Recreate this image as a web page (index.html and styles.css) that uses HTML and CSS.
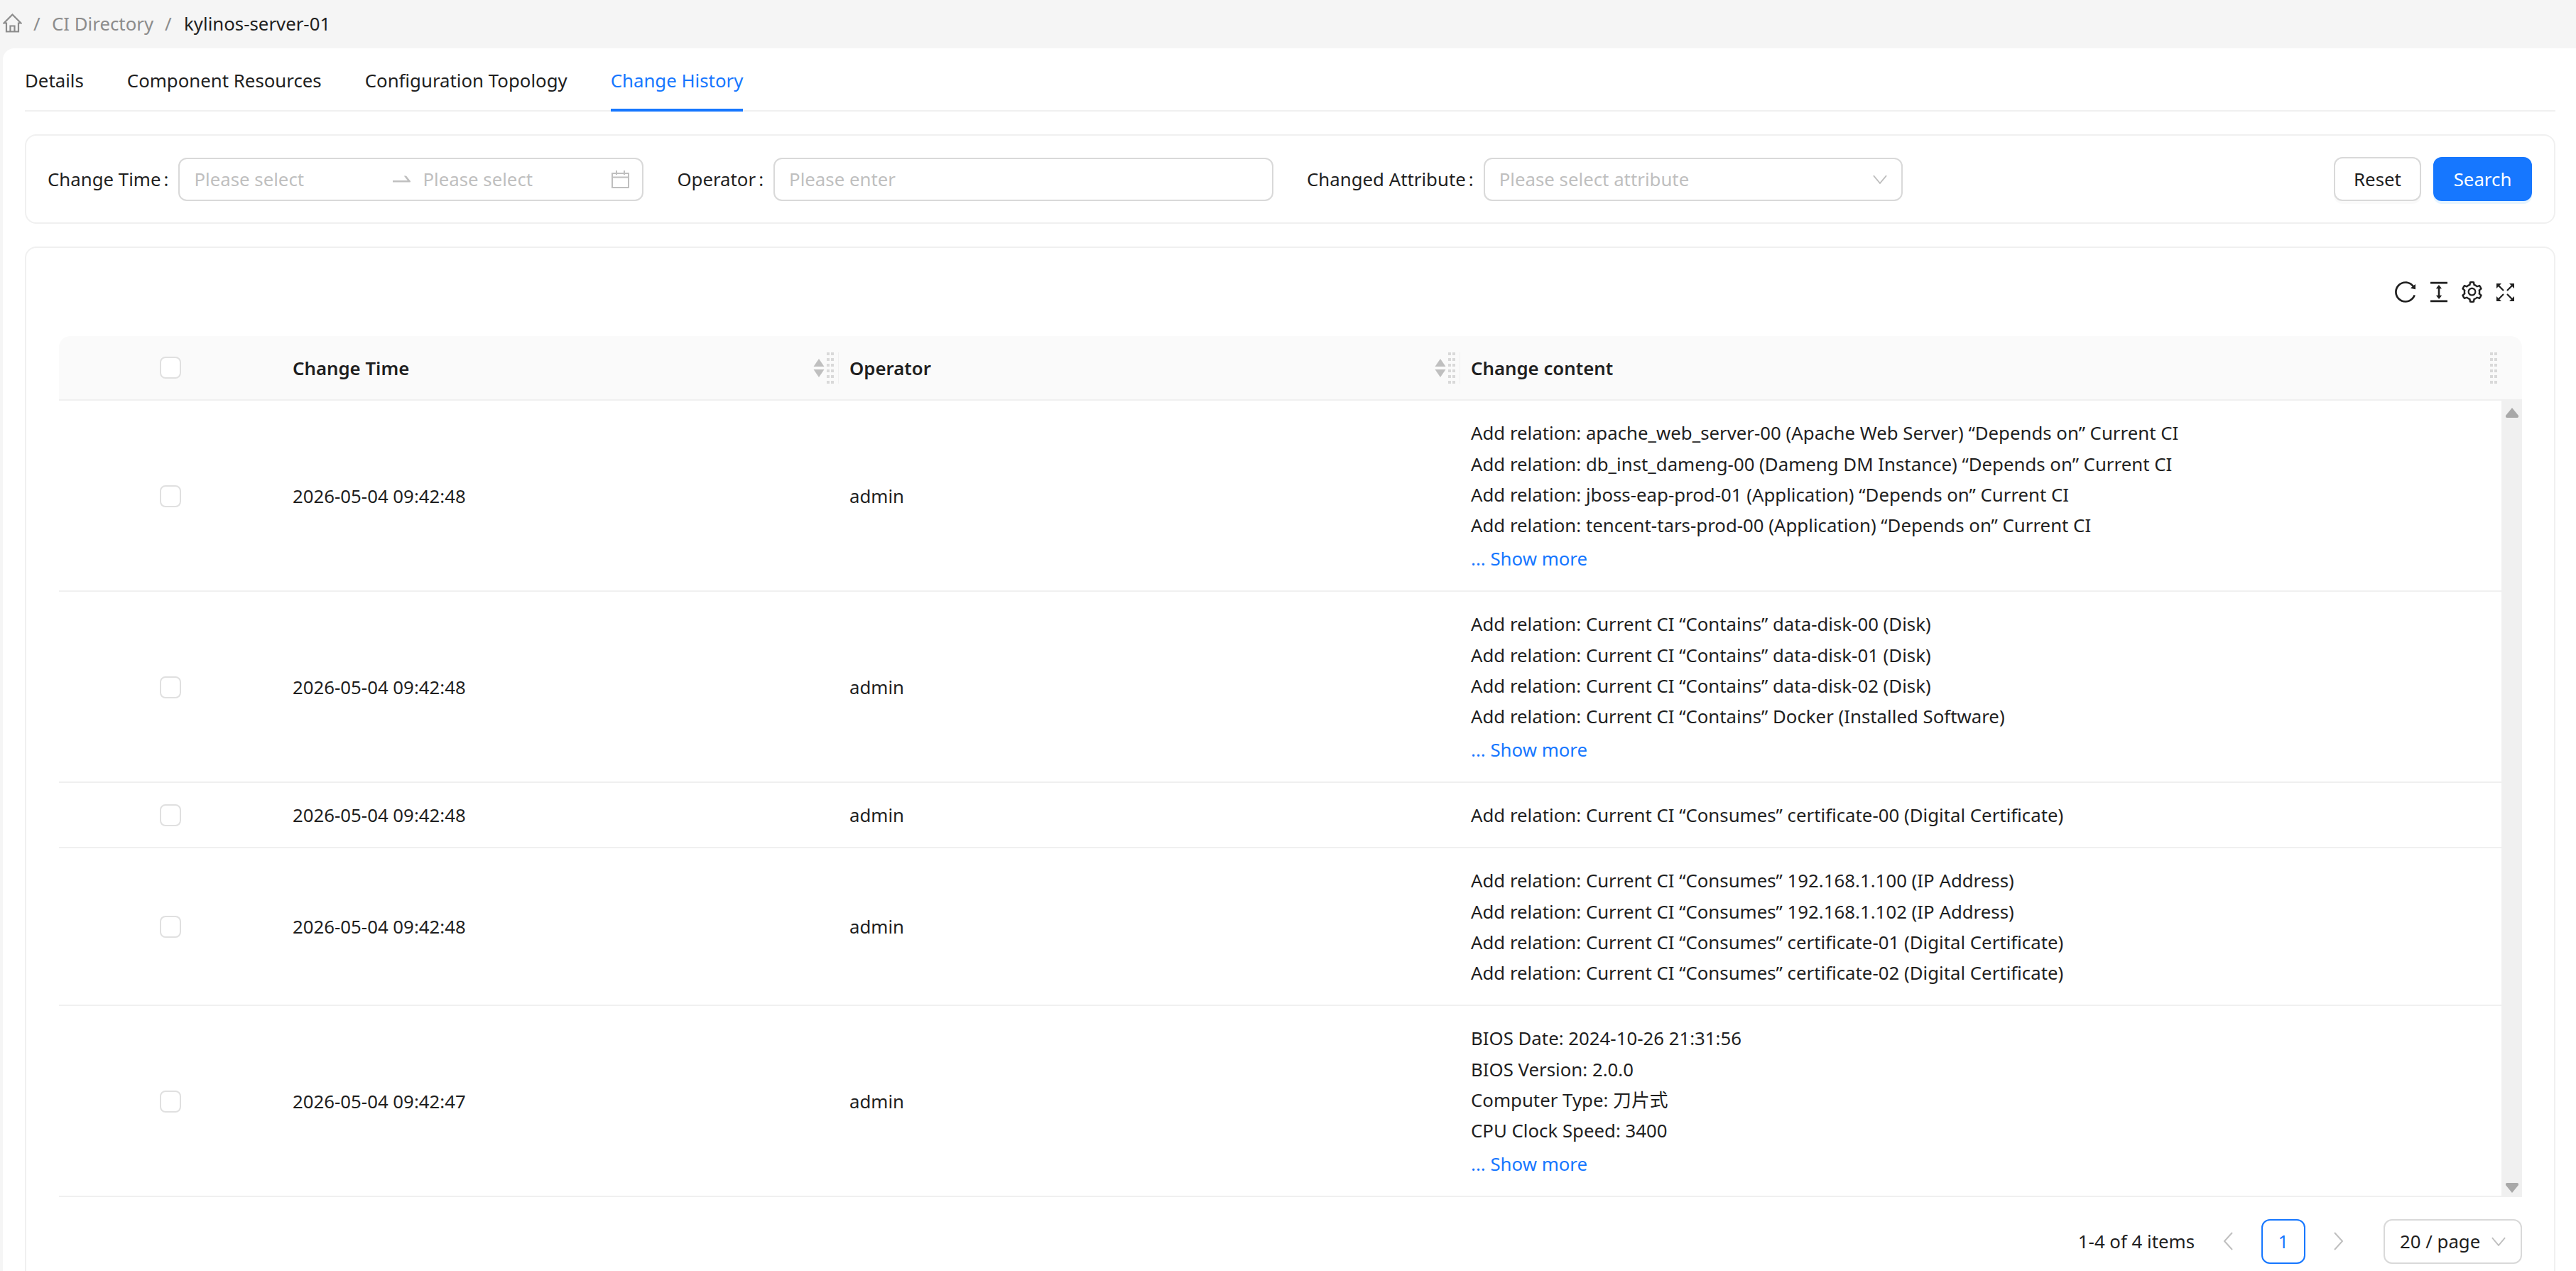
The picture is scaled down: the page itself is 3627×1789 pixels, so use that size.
FILE: index.html
```html
<!DOCTYPE html>
<html lang="en">
<head>
    <meta charset="UTF-8">
    <title>kylinos-server-01 - Change History</title>
    <link rel="stylesheet" href="styles.css">
</head>
<body>
    <svg class="sprite" xmlns="http://www.w3.org/2000/svg">
        <symbol id="grip" viewBox="0 0 10 44">
            <path fill="#d9d9d9" d="M0 0h4v4H0zM6 0h4v4H6zM0 8h4v4H0zM6 8h4v4H6zM0 16h4v4H0zM6 16h4v4H6zM0 24h4v4H0zM6 24h4v4H6zM0 32h4v4H0zM6 32h4v4H6zM0 40h4v4H0zM6 40h4v4H6z"/>
        </symbol>
        <symbol id="sort" viewBox="0 0 16 26">
            <path fill="#bfbfbf" d="M8 0l7.500 11H.5zM.5 15h15L8 26z"/>
        </symbol>
        <symbol id="chevron" viewBox="0 0 22 14">
            <path fill="none" stroke="#bfbfbf" stroke-width="2" d="M1 1l10 12L21 1"/>
        </symbol>
    </svg>

    <nav class="breadcrumb">
        <svg class="home-icon" viewBox="0 0 27 27"><path fill="none" stroke="#8c8c8c" stroke-width="2.200" d="M1.500 13.500L13.500 1.500l12 12h-3.500v12H5v-12zM10.500 25.500v-8h6v8"/></svg>
        <span class="crumb-sep">/</span>
        <span class="crumb-link">CI Directory</span>
        <span class="crumb-sep">/</span>
        <span class="crumb-current">kylinos-server-01</span>
    </nav>

    <main class="content">
        <div class="tabs">
            <div class="tab">Details</div>
            <div class="tab">Component Resources</div>
            <div class="tab">Configuration Topology</div>
            <div class="tab active">Change History</div>
        </div>

        <section class="filter-box">
            <div class="filter-item">
                <label class="filter-label">Change Time<span class="colon">:</span></label>
                <div class="field field-range">
                    <span class="placeholder range-start">Please select</span>
                    <svg class="range-arrow" viewBox="144 376 736 272"><path fill="#bfbfbf" d="M873.100 596.200l-164-208A32 32 0 00684 376h-64.800c-6.700 0-10.400 7.700-6.300 13l144.300 183H152c-4.400 0-8 3.600-8 8v60c0 4.400 3.600 8 8 8h695.900c26.800 0 41.700-30.800 25.200-51.800z"/></svg>
                    <span class="placeholder range-end">Please select</span>
                    <svg class="calendar-icon" viewBox="0 0 25 25"><path fill="none" stroke="#bfbfbf" stroke-width="2" d="M1 4h23v20H1zM1 9.500h23M7 0v6M18 0v6"/></svg>
                </div>
            </div>
            <div class="filter-item">
                <label class="filter-label">Operator<span class="colon">:</span></label>
                <div class="field field-operator"><span class="placeholder">Please enter</span></div>
            </div>
            <div class="filter-item">
                <label class="filter-label">Changed Attribute<span class="colon">:</span></label>
                <div class="field field-attr">
                    <span class="placeholder">Please select attribute</span>
                    <svg class="select-arrow"><use href="#chevron"/></svg>
                </div>
            </div>
            <div class="filter-actions">
                <button class="btn">Reset</button>
                <button class="btn btn-primary">Search</button>
            </div>
        </section>

        <section class="table-card">
            <div class="toolbar">
                <span class="tool"><svg class="tool-icon" viewBox="100 90 820 844"><path d="M909.100 209.300l-56.400 44.100C775.800 155.100 656.200 92 521.900 92 290 92 102.300 279.500 102 511.500 101.700 743.700 289.800 932 521.900 932c181.300 0 335.800-115 394.600-276.100 1.500-4.200-.7-8.900-4.900-10.300l-56.700-19.500a8 8 0 00-10.100 4.800c-1.800 5-3.800 10-5.900 14.900-17.300 41-42.100 77.800-73.700 109.400A344.770 344.770 0 01655.900 829c-42.300 17.900-87.400 27-133.800 27-46.500 0-91.500-9.100-133.800-27A341.500 341.500 0 01279 755.200a342.160 342.160 0 01-73.700-109.400c-17.900-42.400-27-87.400-27-133.900s9.100-91.500 27-133.900c17.300-41 42.100-77.800 73.700-109.400 31.600-31.600 68.400-56.400 109.300-73.800 42.300-17.900 87.400-27 133.800-27 46.500 0 91.500 9.100 133.800 27a341.500 341.500 0 01109.300 73.800c9.900 9.900 19.200 20.400 27.800 31.400l-60.200 47a8 8 0 003 14.100l175.600 43c5 1.200 9.900-2.600 9.900-7.700l.8-180.900c-.1-6.600-7.800-10.300-13-6.200z"/></svg></span>
                <span class="tool"><svg class="tool-icon tool-height" viewBox="176 112 672 800"><path d="M840 836H184c-4.400 0-8 3.600-8 8v60c0 4.400 3.600 8 8 8h656c4.400 0 8-3.600 8-8v-60c0-4.400-3.600-8-8-8zm0-724H184c-4.400 0-8 3.600-8 8v60c0 4.400 3.600 8 8 8h656c4.400 0 8-3.600 8-8v-60c0-4.400-3.600-8-8-8zM610.800 378c6 0 9.400-7 5.700-11.700L515.700 238.700a7.140 7.140 0 00-11.300 0L403.600 366.300a7.230 7.230 0 005.700 11.700H476v268h-62.800c-6 0-9.400 7-5.600 11.700l100.800 127.500c2.900 3.700 8.500 3.700 11.300 0l100.800-127.500c3.700-4.700.4-11.700-5.600-11.700H548V378h62.800z"/></svg></span>
                <span class="tool"><svg class="tool-icon" viewBox="88 64 848 896"><path d="M924.800 625.700l-65.500-56c3.100-19 4.700-38.400 4.700-57.800s-1.600-38.800-4.700-57.800l65.500-56a32.030 32.030 0 009.300-35.200l-.9-2.600a443.740 443.740 0 00-79.700-137.900l-1.800-2.100a32.120 32.120 0 00-35.100-9.500l-81.300 28.900c-30-24.600-63.500-44-99.700-57.600l-15.700-85a32.050 32.050 0 00-25.800-25.700l-2.700-.5c-52.100-9.400-106.900-9.400-159 0l-2.700.5a32.050 32.050 0 00-25.800 25.700l-15.800 85.400a351.860 351.860 0 00-99 57.400l-81.900-29.100a32 32 0 00-35.100 9.500l-1.800 2.100a446.020 446.020 0 00-79.700 137.900l-.9 2.600c-4.500 12.500-.8 26.500 9.300 35.200l66.300 56.600c-3.100 18.800-4.600 38-4.600 57.100 0 19.200 1.500 38.400 4.600 57.100L99 625.500a32.030 32.030 0 00-9.300 35.200l.9 2.600c18.100 50.400 44.900 96.900 79.700 137.900l1.800 2.100a32.120 32.120 0 0035.100 9.500l81.900-29.100c29.800 24.500 63.100 43.900 99 57.400l15.800 85.400a32.050 32.050 0 0025.800 25.700l2.700.5a449.400 449.400 0 00159 0l2.700-.5a32.050 32.050 0 0025.800-25.700l15.700-85a350 350 0 0099.700-57.600l81.300 28.900a32 32 0 0035.100-9.500l1.800-2.100c34.800-41.100 61.600-87.500 79.700-137.900l.9-2.600c4.500-12.300.8-26.300-9.300-35zM788.300 465.900c2.500 15.100 3.800 30.600 3.800 46.100s-1.300 31-3.800 46.100l-6.600 40.100 74.700 63.900a370.030 370.030 0 01-42.600 73.600L721 702.800l-31.400 25.800c-23.900 19.600-50.500 35-79.300 45.800l-38.100 14.300-17.900 97a377.500 377.500 0 01-85 0l-17.900-97.200-37.800-14.500c-28.500-10.800-55-26.200-78.700-45.700l-31.400-25.900-93.400 33.200c-17-22.900-31.200-47.600-42.600-73.600l75.500-64.500-6.500-40c-2.400-14.900-3.700-30.300-3.700-45.500 0-15.300 1.200-30.600 3.700-45.500l6.500-40-75.500-64.500c11.300-26.100 25.600-50.700 42.600-73.600l93.400 33.200 31.400-25.900c23.700-19.500 50.200-34.900 78.700-45.700l37.900-14.300 17.900-97.200c28.100-3.200 56.800-3.200 85 0l17.900 97 38.100 14.300c28.700 10.800 55.400 26.200 79.300 45.800l31.400 25.800 92.800-32.900c17 22.900 31.200 47.600 42.600 73.600L781.800 426l6.500 39.900zM512 326c-97.200 0-176 78.800-176 176s78.800 176 176 176 176-78.800 176-176-78.800-176-176-176zm79.200 255.200A111.600 111.600 0 01512 614c-29.900 0-58-11.700-79.200-32.800A111.600 111.600 0 01400 502c0-29.900 11.700-58 32.800-79.200C454 401.600 482.100 390 512 390c29.900 0 58 11.600 79.200 32.800A111.600 111.600 0 01624 502c0 29.900-11.700 58-32.800 79.200z"/></svg></span>
                <span class="tool"><svg class="tool-full" viewBox="0 0 25 25"><path fill="none" stroke="#1f1f1f" stroke-width="2.200" d="M2 2l8 8M23 2l-8 8M2 23l8-8M23 23l-8-8"/><path fill="#1f1f1f" d="M0 0h7L0 7zM25 0v7l-7-7zM0 25v-7l7 7zM25 25h-7l7-7z"/></svg></span>
            </div>

            <div class="table-head">
                <div class="head-cell head-check"><span class="checkbox"></span></div>
                <div class="head-cell head-divided">
                    <span class="head-title">Change Time</span>
                    <svg class="sort-icon"><use href="#sort"/></svg>
                    <svg class="grip"><use href="#grip"/></svg>
                </div>
                <div class="head-cell head-divided">
                    <span class="head-title">Operator</span>
                    <svg class="sort-icon"><use href="#sort"/></svg>
                    <svg class="grip"><use href="#grip"/></svg>
                </div>
                <div class="head-cell head-last">
                    <span class="head-title">Change content</span>
                    <svg class="grip"><use href="#grip"/></svg>
                </div>
            </div>

            <div class="table-body">
                <div class="rows">
                    <div class="row">
                        <div class="cell cell-check"><span class="checkbox"></span></div>
                        <div class="cell">2026-05-04 09:42:48</div>
                        <div class="cell">admin</div>
                        <div class="cell cell-lines">
                            <div>Add relation: apache_web_server-00 (Apache Web Server) “Depends on” Current CI</div>
                            <div>Add relation: db_inst_dameng-00 (Dameng DM Instance) “Depends on” Current CI</div>
                            <div>Add relation: jboss-eap-prod-01 (Application) “Depends on” Current CI</div>
                            <div>Add relation: tencent-tars-prod-00 (Application) “Depends on” Current CI</div>
                            <div class="more">... Show more</div>
                        </div>
                    </div>
                    <div class="row">
                        <div class="cell cell-check"><span class="checkbox"></span></div>
                        <div class="cell">2026-05-04 09:42:48</div>
                        <div class="cell">admin</div>
                        <div class="cell cell-lines">
                            <div>Add relation: Current CI “Contains” data-disk-00 (Disk)</div>
                            <div>Add relation: Current CI “Contains” data-disk-01 (Disk)</div>
                            <div>Add relation: Current CI “Contains” data-disk-02 (Disk)</div>
                            <div>Add relation: Current CI “Contains” Docker (Installed Software)</div>
                            <div class="more">... Show more</div>
                        </div>
                    </div>
                    <div class="row">
                        <div class="cell cell-check"><span class="checkbox"></span></div>
                        <div class="cell">2026-05-04 09:42:48</div>
                        <div class="cell">admin</div>
                        <div class="cell cell-lines">
                            <div>Add relation: Current CI “Consumes” certificate-00 (Digital Certificate)</div>
                        </div>
                    </div>
                    <div class="row">
                        <div class="cell cell-check"><span class="checkbox"></span></div>
                        <div class="cell">2026-05-04 09:42:48</div>
                        <div class="cell">admin</div>
                        <div class="cell cell-lines">
                            <div>Add relation: Current CI “Consumes” 192.168.1.100 (IP Address)</div>
                            <div>Add relation: Current CI “Consumes” 192.168.1.102 (IP Address)</div>
                            <div>Add relation: Current CI “Consumes” certificate-01 (Digital Certificate)</div>
                            <div>Add relation: Current CI “Consumes” certificate-02 (Digital Certificate)</div>
                        </div>
                    </div>
                    <div class="row">
                        <div class="cell cell-check"><span class="checkbox"></span></div>
                        <div class="cell">2026-05-04 09:42:47</div>
                        <div class="cell">admin</div>
                        <div class="cell cell-lines">
                            <div>BIOS Date: 2024-10-26 21:31:56</div>
                            <div>BIOS Version: 2.0.0</div>
                            <div>Computer Type: 刀片式</div>
                            <div>CPU Clock Speed: 3400</div>
                            <div class="more">... Show more</div>
                        </div>
                    </div>
                </div>
                <div class="scrollbar">
                    <svg class="scroll-arrow" viewBox="0 0 18 14"><path d="M9 0l9 11q.5 3-2 3H2q-2.500 0-2-3z"/></svg>
                    <svg class="scroll-arrow" viewBox="0 0 18 14"><path d="M9 14L0 3q-.5-3 2-3h14q2.500 0 2 3z"/></svg>
                </div>
            </div>

            <div class="pagination">
                <span class="page-total">1-4 of 4 items</span>
                <svg class="page-arrow page-prev" viewBox="0 0 14 26"><path d="M13 1L2 13l11 12"/></svg>
                <span class="page-num">1</span>
                <svg class="page-arrow page-next" viewBox="0 0 14 26"><path d="M1 1l11 12L1 25"/></svg>
                <div class="page-size">
                    <span>20 / page</span>
                    <svg class="size-arrow"><use href="#chevron"/></svg>
                </div>
            </div>
        </section>
    </main>
</body>
</html>
```

FILE: styles.css
```css
html, body {
    height: 100%;
}
body {
    margin: 0;
    overflow: hidden;
    background: #f5f5f5;
    color: #1f1f1f;
    font-family: "Noto Sans", "Noto Sans CJK SC", sans-serif;
    font-size: 25.8px;
    line-height: 44px;
}
.sprite {
    display: none;
}

/* breadcrumb */
.breadcrumb {
    display: flex;
    align-items: center;
    height: 68px;
    box-sizing: border-box;
    padding: 0 0 3px 4px;
}
.home-icon {
    width: 27px;
    height: 27px;
    margin-right: 16px;
}
.crumb-sep {
    color: #8c8c8c;
    width: 10px;
}
.crumb-link {
    color: #8c8c8c;
    margin: 0 16px;
}
.crumb-current {
    margin-left: 17px;
}

/* white page card */
.content {
    margin-left: 4px;
    padding: 0 29px 0 31px;
    background: #fff;
    border-top-left-radius: 16px;
    min-height: 1721px;
}
.tabs {
    display: flex;
    gap: 61px;
    height: 89px;
    box-sizing: border-box;
    border-bottom: 2px solid #f0f0f0;
}
.tab {
    padding-top: 23px;
    height: 89px;
    box-sizing: border-box;
}
.tab.active {
    color: #1677ff;
    border-bottom: 4px solid #1677ff;
}

/* filter bar */
.filter-box {
    display: flex;
    align-items: center;
    height: 126px;
    box-sizing: border-box;
    margin-top: 32px;
    padding: 0 31px 0 30px;
    border: 2px solid #f0f0f0;
    border-radius: 16px;
}
.filter-item {
    display: flex;
    align-items: center;
    margin-right: 47px;
}
.filter-label {
    margin-right: 14px;
    white-space: nowrap;
}
.colon {
    margin-left: 4px;
}
.field {
    display: flex;
    align-items: center;
    height: 61px;
    box-sizing: border-box;
    padding: 0 20px;
    border: 2px solid #d9d9d9;
    border-radius: 12px;
    background: #fff;
}
.field-range {
    width: 655px;
    padding-right: 18px;
}
.field-operator {
    width: 704px;
}
.field-attr {
    width: 590px;
    justify-content: space-between;
}
.placeholder {
    color: #bfbfbf;
    white-space: nowrap;
}
.range-start {
    width: 280px;
}
.range-arrow {
    width: 25px;
    height: 10px;
    margin-right: 17px;
}
.range-end {
    width: 266px;
}
.calendar-icon {
    width: 25px;
    height: 25px;
}
.select-arrow {
    width: 20px;
    height: 13px;
}
.filter-actions {
    display: flex;
    gap: 17px;
    margin-left: auto;
}
.btn {
    height: 62px;
    width: 123px;
    padding: 0;
    border: 2px solid #d9d9d9;
    border-radius: 12px;
    background: #fff;
    color: #1f1f1f;
    font: inherit;
    box-shadow: 0 4px 0 rgba(0, 0, 0, 0.02);
}
.btn-primary {
    width: 139px;
    border-color: #1677ff;
    background: #1677ff;
    color: #fff;
    box-shadow: 0 4px 0 #e6f4ff;
}

/* table card */
.table-card {
    margin-top: 32px;
    padding: 0 45px 0 46px;
    border: 2px solid #f0f0f0;
    border-radius: 16px;
    height: 1500px;
    box-sizing: border-box;
}
.toolbar {
    display: flex;
    justify-content: flex-end;
    align-items: center;
    height: 124px;
}
.tool {
    display: flex;
    justify-content: center;
    align-items: center;
    width: 47px;
}
.tool-icon {
    width: 29px;
    height: 30px;
    fill: #1f1f1f;
}
.tool-height {
    width: 24px;
}
.tool-full {
    width: 25px;
    height: 25px;
}

.table-head {
    display: grid;
    grid-template-columns: 314px 784px 875px 1fr;
    height: 91px;
    box-sizing: border-box;
    background: #fafafa;
    border-bottom: 2px solid #f0f0f0;
    border-radius: 16px 16px 0 0;
    font-weight: 600;
}
.head-cell {
    display: flex;
    align-items: center;
    padding-left: 15px;
}
.head-check {
    justify-content: center;
    padding: 0;
}
.head-divided::after {
    content: "";
    width: 1px;
    height: 44px;
    margin-left: 6px;
    background: #f0f0f0;
}
.head-last {
    padding-right: 35px;
}
.head-title {
    margin-right: auto;
}
.sort-icon {
    width: 16px;
    height: 26px;
    margin-right: 3px;
}
.grip {
    width: 10px;
    height: 44px;
}

.checkbox {
    display: block;
    width: 30px;
    height: 31px;
    box-sizing: border-box;
    border: 2px solid #e0e0e0;
    border-radius: 8px;
    background: #fff;
}

.table-body {
    display: flex;
}
.rows {
    flex: 1;
}
.row {
    display: grid;
    grid-template-columns: 314px 784px 875px 1fr;
    padding: 24.33px 0 22.33px;
    border-bottom: 2px solid #f0f0f0;
    line-height: 43.33px;
}
.cell {
    display: flex;
    align-items: center;
    padding-left: 15px;
    white-space: nowrap;
}
.cell-check {
    justify-content: center;
    padding: 0;
}
.cell-lines {
    display: block;
}
.more {
    color: #1677ff;
    padding-top: 3.67px;
}
.scrollbar {
    display: flex;
    flex-direction: column;
    justify-content: space-between;
    align-items: center;
    box-sizing: border-box;
    width: 29px;
    padding: 10px 0 6px;
    background: #f0f0f0;
}
.scroll-arrow {
    width: 18px;
    height: 14px;
    fill: #a8a8a8;
}

/* pagination */
.pagination {
    display: flex;
    align-items: center;
    justify-content: flex-end;
    margin-top: 31px;
}
.page-total {
    margin-right: 40px;
}
.page-arrow {
    width: 14px;
    height: 26px;
    fill: none;
    stroke: #bfbfbf;
    stroke-width: 2;
}
.page-prev {
    margin-right: 40px;
}
.page-next {
    margin: 0 56px 0 40px;
}
.page-num {
    width: 62px;
    height: 63px;
    box-sizing: border-box;
    border: 2px solid #1677ff;
    border-radius: 12px;
    color: #1677ff;
    text-align: center;
    line-height: 59px;
}
.page-size {
    display: flex;
    align-items: center;
    justify-content: space-between;
    width: 195px;
    height: 63px;
    box-sizing: border-box;
    padding: 0 21px;
    border: 2px solid #d9d9d9;
    border-radius: 12px;
}
.size-arrow {
    width: 20px;
    height: 13px;
}
```
